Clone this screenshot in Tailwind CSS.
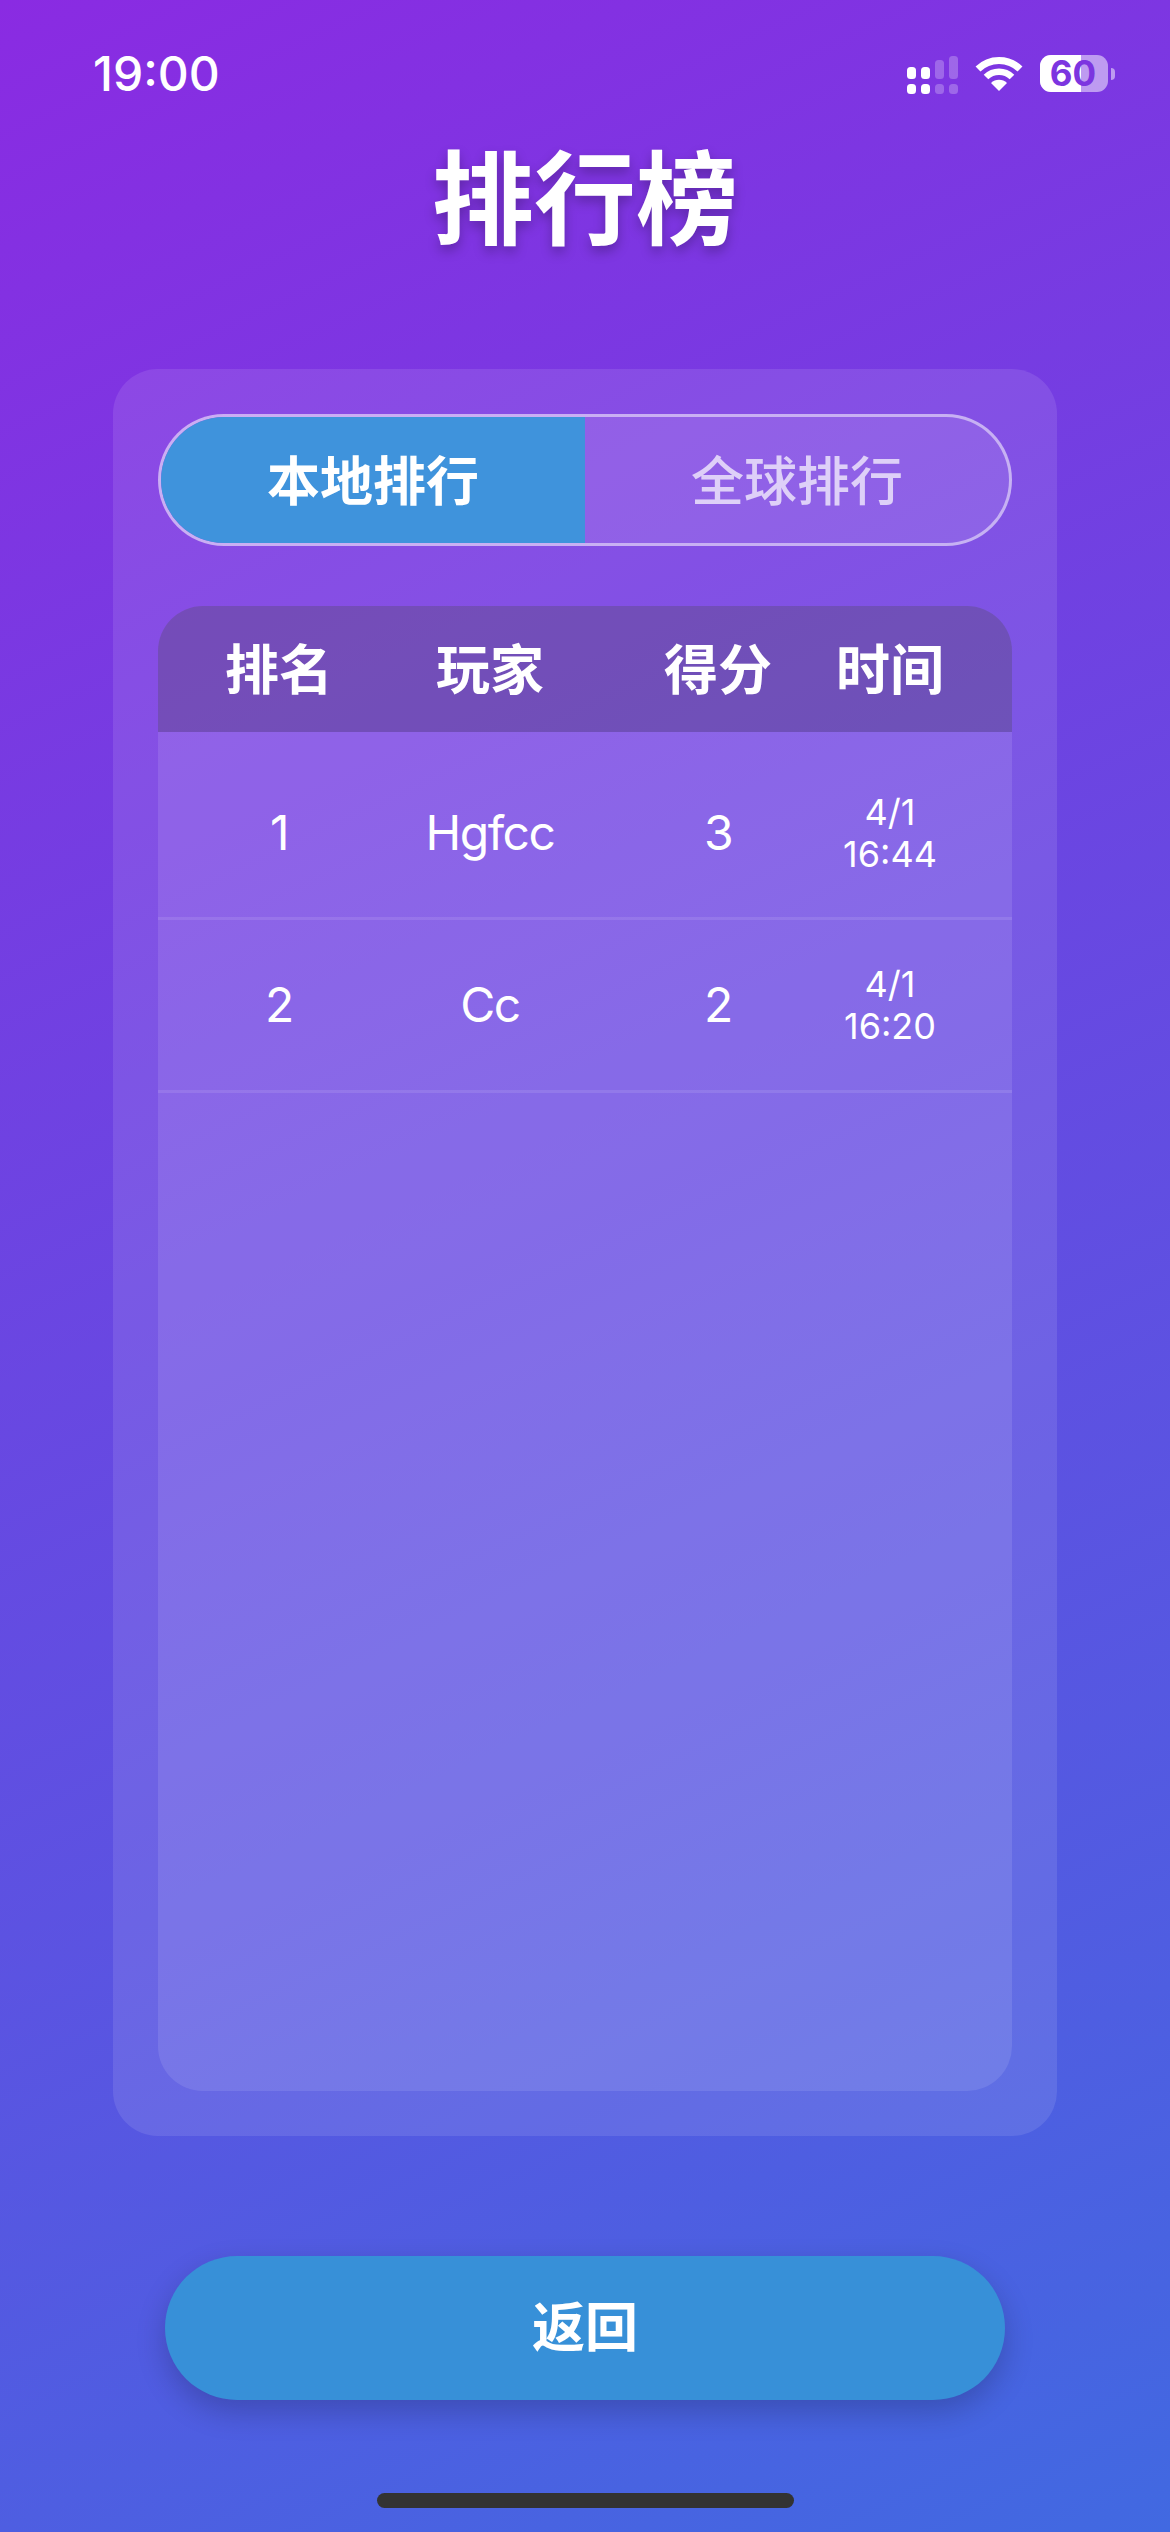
<!DOCTYPE html>
<html lang="zh-CN">
<head>
  <meta charset="UTF-8">
  <meta name="viewport" content="width=device-width, initial-scale=1.0">
  <title>排行榜</title>
  <script src="https://cdn.jsdelivr.net/npm/@tailwindcss/browser@4"></script>
</head>
<body class="bg-[#6a45e0]">
  <div class="w-[1170px] h-[2532px] flex flex-col overflow-hidden text-white bg-linear-[155deg] from-[#8a2be2] to-[#4169e1] font-['Inter','Noto_Sans_CJK_SC',sans-serif]">

    <!-- Status bar -->
    <div class="h-[110px] pl-[93px] pr-[55px] flex items-start justify-between">
      <span class="mt-[46px] text-[48px] leading-[56px] font-medium">19:00</span>
      <div class="mt-[55px] flex items-start">
        <svg width="51" height="38" viewBox="0 0 51 38" class="mt-[1px]" fill="#fff">
          <rect x="0" y="11" width="9" height="12" rx="3.5"/>
          <rect x="14" y="11" width="9" height="12" rx="3.5"/>
          <rect x="28" y="4" width="9" height="19" rx="3.5" fill-opacity="0.25"/>
          <rect x="42" y="0" width="9" height="23" rx="3.5" fill-opacity="0.25"/>
          <rect x="0" y="28" width="9" height="10" rx="3.5"/>
          <rect x="14" y="28" width="9" height="10" rx="3.5"/>
          <rect x="28" y="28" width="9" height="10" rx="3.5" fill-opacity="0.25"/>
          <rect x="42" y="28" width="9" height="10" rx="3.5" fill-opacity="0.25"/>
        </svg>
        <svg width="48" height="35" viewBox="0 0 48 35" class="ml-[17px] mt-[1px]" fill="none" stroke="#fff">
          <path d="M3 13 A 30 30 0 0 1 45 13" stroke-width="7"/>
          <path d="M11 21 A 18.5 18.5 0 0 1 37 21" stroke-width="6.5"/>
          <path d="M24 35 L16 27 A 11.5 11.5 0 0 1 32 27 Z" fill="#fff" stroke="none"/>
        </svg>
        <div class="relative ml-[17px] w-[68px] h-[37px] rounded-[11px] bg-white/50 flex items-center justify-center">
          <div class="absolute left-0 top-0 bottom-0 w-[41px] rounded-l-[11px] bg-white"></div>
          <span class="relative text-[35px] leading-none font-bold text-[#7c35e0] -ml-[2px]">60</span>
        </div>
        <div class="ml-[3px] mt-[13px] w-[4px] h-[12px] rounded-r-full bg-white/50"></div>
      </div>
    </div>

    <!-- Title -->
    <h1 class="h-[174px] pt-[6px] flex items-center justify-center text-[102px] leading-none font-bold [text-shadow:0_6px_12px_rgba(0,0,0,0.25)]">排行榜</h1>

    <!-- Card -->
    <div class="mt-[85px] mx-[113px] h-[1767px] p-[45px] flex flex-col rounded-[45px] bg-white/10">

      <!-- Tabs -->
      <div class="h-[132px] flex rounded-full overflow-hidden border-[3px] border-white/50 bg-white/10 text-[53px] font-bold">
        <div class="w-1/2 pt-[6px] flex items-center justify-center bg-[#3f93dc]">本地排行</div>
        <div class="w-1/2 pt-[6px] flex items-center justify-center font-medium text-white/70">全球排行</div>
      </div>

      <!-- Table -->
      <div class="mt-[60px] flex-1 rounded-[45px] overflow-hidden bg-white/10">
        <div class="h-[126px] pt-[3px] pl-[30px] pr-[59px] grid grid-cols-[182px_240px_216px_128px] items-center text-center text-[54px] font-bold bg-black/20">
          <div>排名</div>
          <div>玩家</div>
          <div>得分</div>
          <div>时间</div>
        </div>
        <div class="h-[188px] pt-[16px] pl-[30px] pr-[59px] grid grid-cols-[182px_240px_216px_128px] items-center text-center text-[48px] tracking-[-1.5px] border-b-[3px] border-white/10">
          <div>1</div>
          <div>Hgfcc</div>
          <div>3</div>
          <div class="text-[36px] leading-[42px] tracking-normal">4/1<br>16:44</div>
        </div>
        <div class="h-[173px] pl-[30px] pr-[59px] grid grid-cols-[182px_240px_216px_128px] items-center text-center text-[48px] tracking-[-1.5px] border-b-[3px] border-white/10">
          <div>2</div>
          <div>Cc</div>
          <div>2</div>
          <div class="text-[36px] leading-[42px] tracking-normal">4/1<br>16:20</div>
        </div>
      </div>
    </div>

    <!-- Back button -->
    <button class="mt-[120px] mx-[165px] h-[144px] pt-[2px] rounded-full bg-[#3790d8] text-[53px] font-bold shadow-[0_12px_30px_rgba(0,0,0,0.2)]">返回</button>

    <!-- Home indicator -->
    <div class="mt-[93px] mx-auto w-[417px] h-[15px] rounded-full bg-[#333]"></div>
  </div>
</body>
</html>
